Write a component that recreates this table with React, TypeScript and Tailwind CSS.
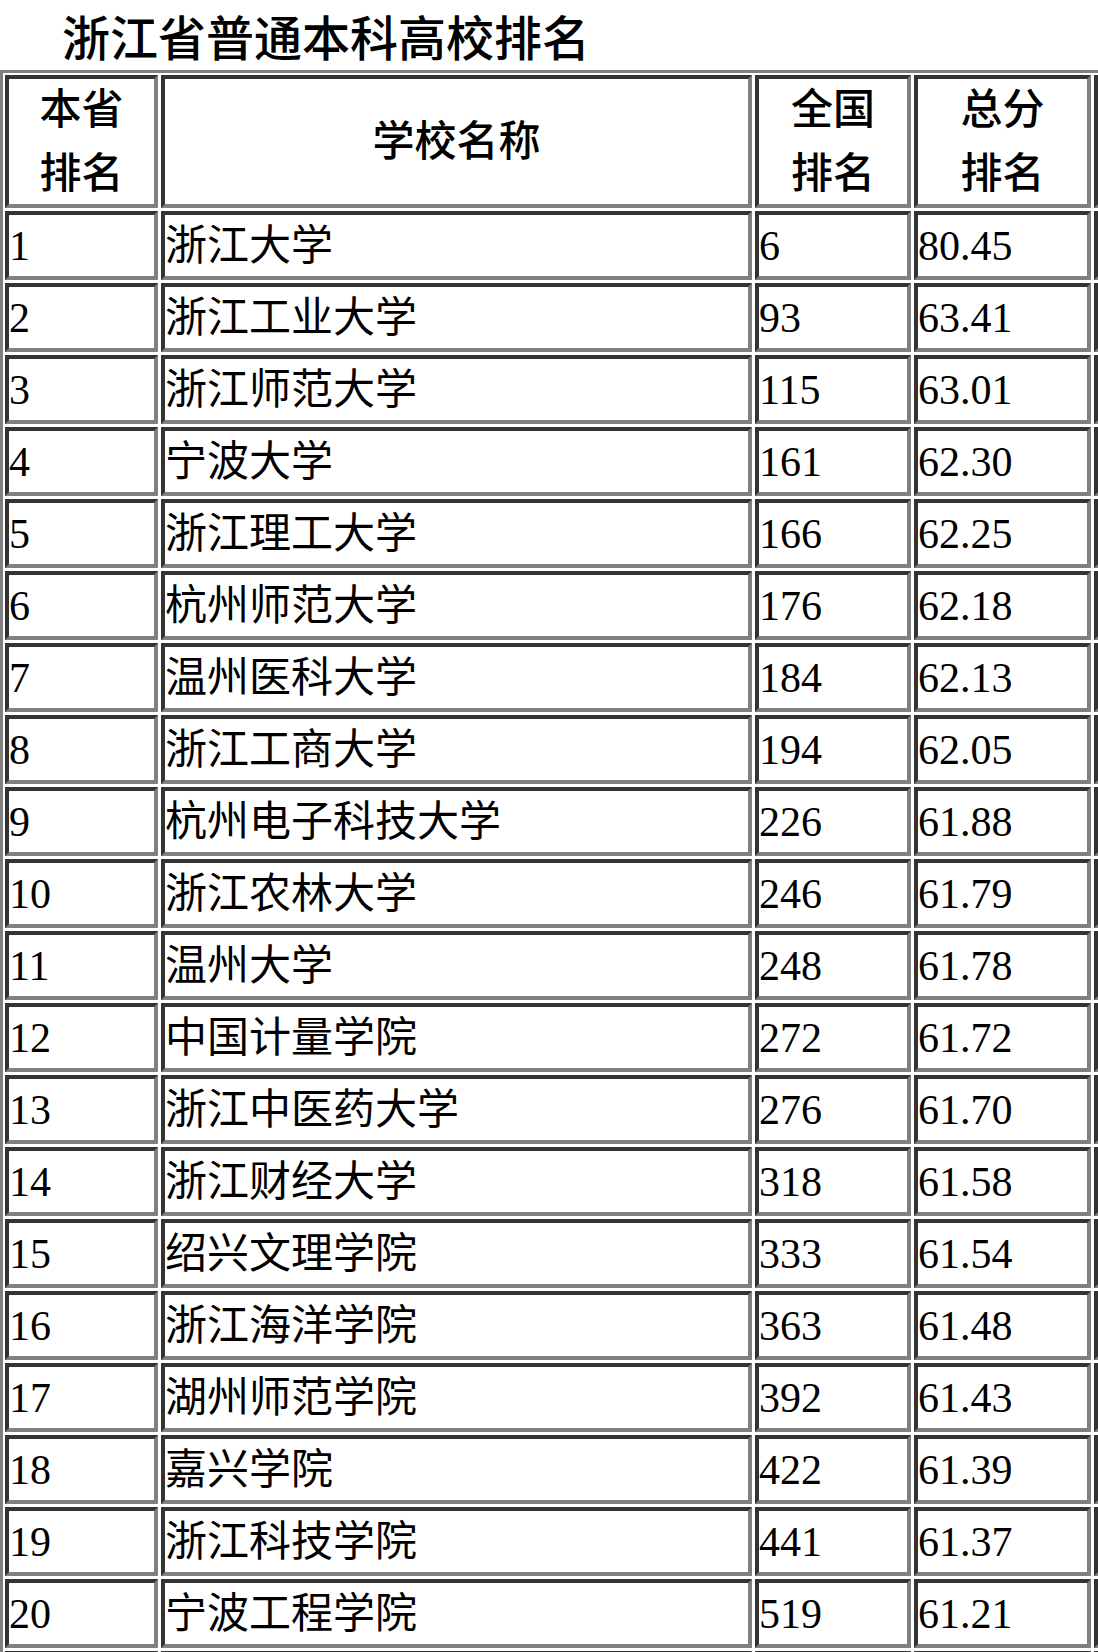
const rows: [string, string, string, string][] = [
  ['1', '浙江大学', '6', '80.45'],
  ['2', '浙江工业大学', '93', '63.41'],
  ['3', '浙江师范大学', '115', '63.01'],
  ['4', '宁波大学', '161', '62.30'],
  ['5', '浙江理工大学', '166', '62.25'],
  ['6', '杭州师范大学', '176', '62.18'],
  ['7', '温州医科大学', '184', '62.13'],
  ['8', '浙江工商大学', '194', '62.05'],
  ['9', '杭州电子科技大学', '226', '61.88'],
  ['10', '浙江农林大学', '246', '61.79'],
  ['11', '温州大学', '248', '61.78'],
  ['12', '中国计量学院', '272', '61.72'],
  ['13', '浙江中医药大学', '276', '61.70'],
  ['14', '浙江财经大学', '318', '61.58'],
  ['15', '绍兴文理学院', '333', '61.54'],
  ['16', '浙江海洋学院', '363', '61.48'],
  ['17', '湖州师范学院', '392', '61.43'],
  ['18', '嘉兴学院', '422', '61.39'],
  ['19', '浙江科技学院', '441', '61.37'],
  ['20', '宁波工程学院', '519', '61.21'],
]

const cell =
  'border-t-4 border-l-4 border-t-[#333333] border-l-[#333333] border-b-4 border-r-4 border-b-[#808080] border-r-[#808080] bg-white'

function HeadCell({ lines }: { lines: string[] }) {
  return (
    <div className={`${cell} flex flex-col items-center justify-center text-[42px] leading-[64px] font-medium`}>
      {lines.map((l) => (
        <span key={l}>{l}</span>
      ))}
    </div>
  )
}

function BodyCell({ text }: { text: string }) {
  return (
    <div className={`${cell} flex items-center text-[42px] leading-[46px] whitespace-nowrap`}>
      {text}
    </div>
  )
}

export default function App() {
  return (
    <div className="w-[1098px] h-[1652px] overflow-hidden bg-white text-black font-['Liberation_Serif','Noto_Sans_CJK_SC',serif]">
      {/* Title */}
      <div className="h-[70px] pl-[62px] pt-[16px] text-[48px] leading-[48px] font-medium whitespace-nowrap">
        浙江省普通本科高校排名
      </div>

      {/* Ranking table */}
      <div className="w-[1300px] border-t-[3px] border-l-[3px] border-[#808080] pt-[2px] pl-[2px]">
        <div className="grid grid-cols-[153px_591px_156px_177px_200px] grid-rows-[133px] auto-rows-[69px] gap-[3px]">
          <HeadCell lines={['本省', '排名']} />
          <HeadCell lines={['学校名称']} />
          <HeadCell lines={['全国', '排名']} />
          <HeadCell lines={['总分', '排名']} />
          <HeadCell lines={['']} />
          {rows.map((r) => (
            <>
              <BodyCell key={r[0] + 'a'} text={r[0]} />
              <BodyCell key={r[0] + 'b'} text={r[1]} />
              <BodyCell key={r[0] + 'c'} text={r[2]} />
              <BodyCell key={r[0] + 'd'} text={r[3]} />
              <BodyCell key={r[0] + 'e'} text="" />
            </>
          ))}
          {['a', 'b', 'c', 'd', 'e'].map((k) => (
            <BodyCell key={'x' + k} text="" />
          ))}
        </div>
      </div>
    </div>
  )
}
